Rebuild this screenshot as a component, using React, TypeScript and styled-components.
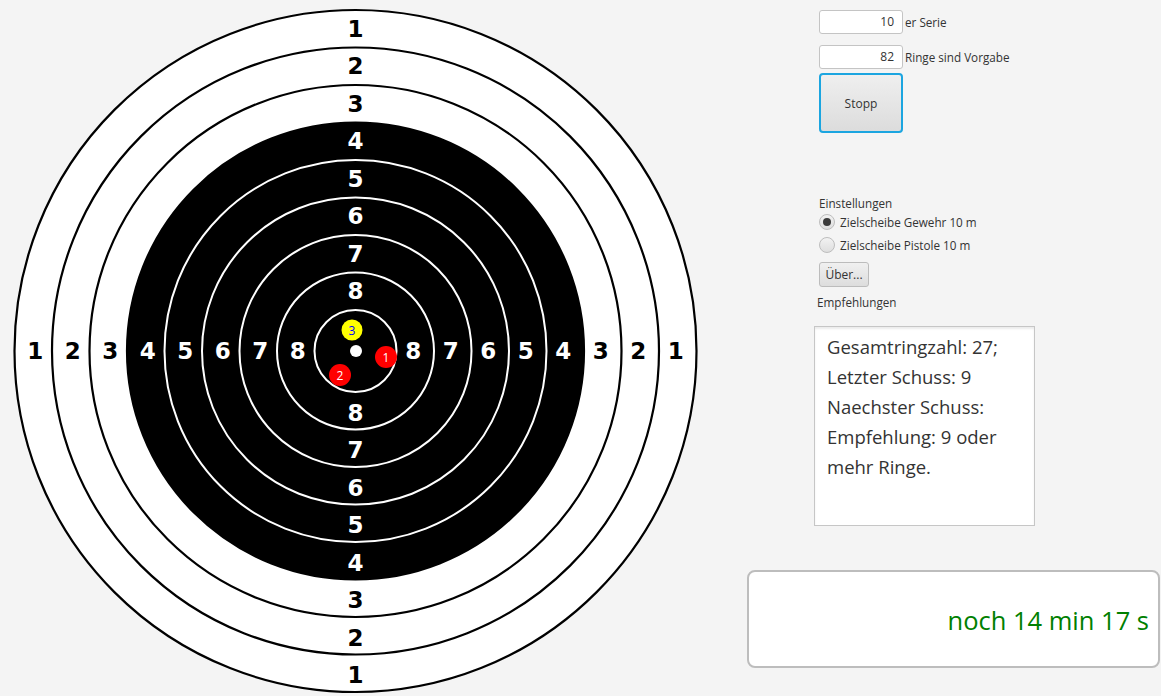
import React from "react";
import styled, { createGlobalStyle } from "styled-components";

const GlobalStyle = createGlobalStyle`
  html, body {
    margin: 0;
    padding: 0;
    background: #f4f4f4;
  }
  body {
    font-family: "Open Sans", "Noto Sans", "Liberation Sans", sans-serif;
    color: #333;
  }
`;

const Page = styled.div`
  display: flex;
  width: 1161px;
  height: 696px;
  overflow: hidden;
  background: #f4f4f4;
`;

const TargetArea = styled.div`
  width: 747px;
  height: 696px;
  flex: none;
`;

const Side = styled.div`
  width: 414px;
  display: flex;
  flex-direction: column;
  padding-top: 10px;
  box-sizing: border-box;
`;

const Controls = styled.div`
  margin-left: 72px;
  display: flex;
  flex-direction: column;
  font-size: 12px;
`;

const FieldRow = styled.div<{ $gap?: number }>`
  display: flex;
  align-items: center;
  height: 24px;
  margin-bottom: ${(p) => p.$gap ?? 0}px;
`;

const Field = styled.div`
  width: 84px;
  height: 24px;
  box-sizing: border-box;
  background: #fff;
  border: 1px solid #c4c4c4;
  border-radius: 3px;
  text-align: right;
  padding-right: 8px;
  line-height: 22px;
  font-size: 12px;
  color: #333;
`;

const FieldLabel = styled.span`
  margin-left: 2px;
  font-size: 11.7px;
`;

const StopButton = styled.div`
  margin-top: 4px;
  width: 84px;
  height: 60px;
  box-sizing: border-box;
  border: 2px solid #1ba5e0;
  border-radius: 4px;
  background: linear-gradient(#efefef, #dcdcdc);
  display: flex;
  align-items: center;
  justify-content: center;
  font-size: 12px;
  color: #333;
`;

const Caption = styled.div<{ $top: number; $shift?: number }>`
  margin-top: ${(p) => p.$top}px;
  margin-left: ${(p) => p.$shift ?? 0}px;
  font-size: 11.7px;
  line-height: 16px;
`;

const RadioRow = styled.div<{ $top: number }>`
  display: flex;
  align-items: center;
  gap: 5px;
  height: 18px;
  margin-top: ${(p) => p.$top}px;
  font-size: 11.7px;
`;

const RadioDot = styled.span<{ $on?: boolean }>`
  width: 16px;
  height: 16px;
  box-sizing: border-box;
  border-radius: 50%;
  border: 1px solid #bdbdbd;
  background: linear-gradient(#f2f2f2, #dedede);
  display: flex;
  align-items: center;
  justify-content: center;
  &::after {
    content: "";
    display: ${(p) => (p.$on ? "block" : "none")};
    width: 8px;
    height: 8px;
    border-radius: 50%;
    background: #3a3a3a;
  }
`;

const SmallButton = styled.div`
  margin-top: 8px;
  width: 50px;
  height: 25px;
  box-sizing: border-box;
  border: 1px solid #bcbcbc;
  border-radius: 3px;
  background: linear-gradient(#f0f0f0, #dddddd);
  display: flex;
  align-items: center;
  justify-content: center;
  font-size: 12px;
`;

const TextArea = styled.div`
  margin-left: 67px;
  margin-top: 16px;
  width: 221px;
  height: 200px;
  box-sizing: border-box;
  background: #fff;
  border: 1px solid #c6c6c6;
  box-shadow: inset 0 2px 2px rgba(0, 0, 0, 0.08);
  padding: 5px 12px;
  font-size: 18.5px;
  line-height: 30px;
  color: #333;
`;

const TimerBox = styled.div`
  margin-top: 44px;
  width: 413px;
  height: 98px;
  box-sizing: border-box;
  background: #fff;
  border: 2px solid #bdbdbd;
  border-radius: 8px;
  display: flex;
  align-items: center;
  justify-content: flex-end;
  padding: 2px 9px 0 0;
  font-size: 25.5px;
  color: #008000;
`;

const CX = 355.5;
const CY = 351;
const STEP = 37.5;
const R0 = 341;
const radii = Array.from({ length: 9 }, (_, i) => R0 - STEP * i);

const Target = () => {
  const labels: React.ReactNode[] = [];
  for (let k = 1; k <= 8; k++) {
    const d = R0 - STEP * (k - 1) - STEP / 2;
    const fill = k <= 3 ? "#000" : "#fff";
    const pts = [
      [CX, CY - d],
      [CX, CY + d + 2],
      [CX - d + 2, CY],
      [CX + d - 2, CY],
    ];
    pts.forEach(([x, y], i) =>
      labels.push(
        <text
          key={`${k}-${i}`}
          x={x}
          y={y}
          fill={fill}
          fontFamily="DejaVu Sans, sans-serif"
          fontWeight="bold"
          fontSize="23"
          textAnchor="middle"
          dominantBaseline="central"
        >
          {k}
        </text>
      )
    );
  }
  return (
    <svg width="747" height="696" viewBox="0 0 747 696">
      {radii.map((r, i) => (
        <circle
          key={r}
          cx={CX}
          cy={CY}
          r={r}
          fill={i < 3 ? "#fff" : "#000"}
          stroke={i < 4 ? "#000" : "#fff"}
          strokeWidth={i < 4 ? 2.2 : 2}
        />
      ))}
      {labels}
      <circle cx={356} cy={351} r={6} fill="#fff" />
      <circle cx={352} cy={330} r={10.5} fill="#ffff00" />
      <text x={352} y={330.5} fill="#0000ff" fontSize="12" fontFamily="Open Sans, sans-serif" textAnchor="middle" dominantBaseline="central">3</text>
      <circle cx={386} cy={357} r={11} fill="#ff0000" />
      <text x={386} y={357.5} fill="#fff" fontSize="12" fontFamily="Open Sans, sans-serif" textAnchor="middle" dominantBaseline="central">1</text>
      <circle cx={340} cy={375} r={11} fill="#ff0000" />
      <text x={340} y={375.5} fill="#fff" fontSize="12" fontFamily="Open Sans, sans-serif" textAnchor="middle" dominantBaseline="central">2</text>
    </svg>
  );
};

export default function App() {
  return (
    <Page>
      <GlobalStyle />
      <TargetArea>
        <Target />
      </TargetArea>
      <Side>
        <Controls>
          <FieldRow $gap={11}>
            <Field>10</Field>
            <FieldLabel>er Serie</FieldLabel>
          </FieldRow>
          <FieldRow>
            <Field>82</Field>
            <FieldLabel>Ringe sind Vorgabe</FieldLabel>
          </FieldRow>
          <StopButton>Stopp</StopButton>
          <Caption $top={62}>Einstellungen</Caption>
          <RadioRow $top={2}>
            <RadioDot $on />
            Zielscheibe Gewehr 10 m
          </RadioRow>
          <RadioRow $top={5}>
            <RadioDot />
            Zielscheibe Pistole 10 m
          </RadioRow>
          <SmallButton>Über...</SmallButton>
          <Caption $top={7} $shift={-2}>Empfehlungen</Caption>
        </Controls>
        <TextArea>
          Gesamtringzahl: 27;
          <br />
          Letzter Schuss: 9
          <br />
          Naechster Schuss:
          <br />
          Empfehlung: 9 oder mehr Ringe.
        </TextArea>
        <TimerBox>noch 14 min 17 s</TimerBox>
      </Side>
    </Page>
  );
}
